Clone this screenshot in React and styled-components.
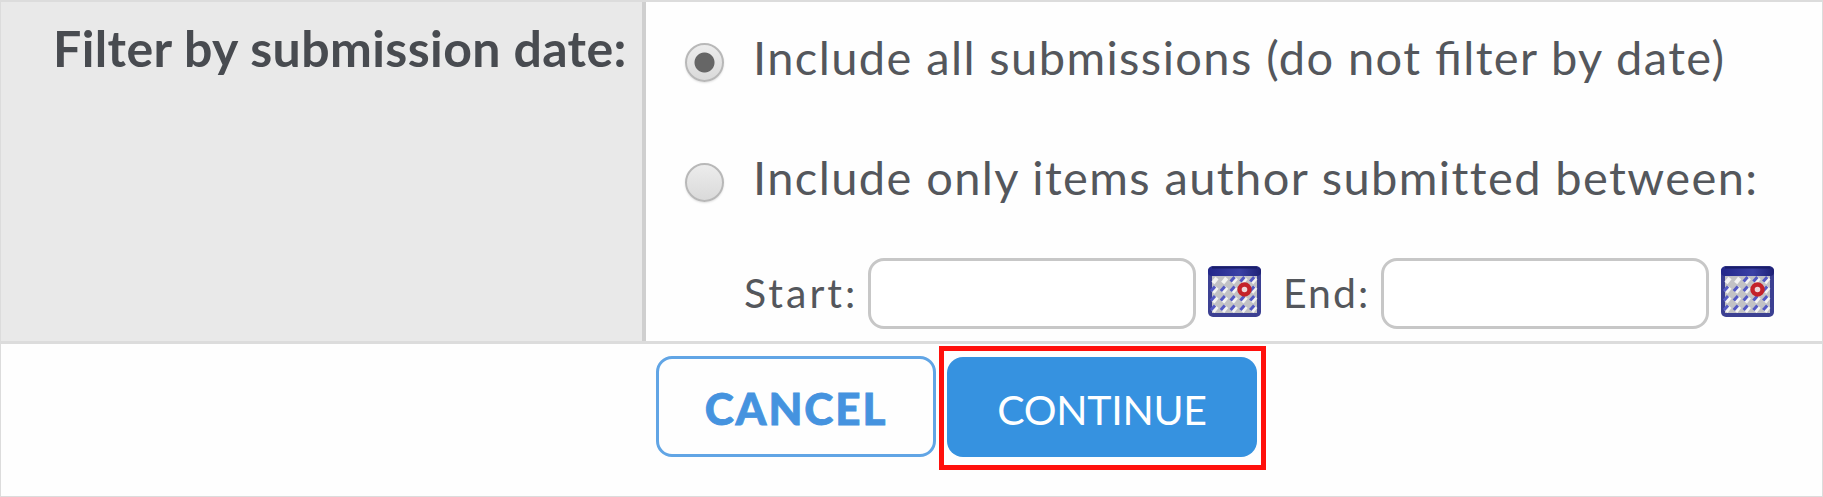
import React, { useState } from 'react'
import styled, { createGlobalStyle } from 'styled-components'

const GlobalStyle = createGlobalStyle`
	* {
		box-sizing: border-box;
	}
	body {
		margin: 0;
		background: #fefefe;
		font-family: Lato, 'Liberation Sans', sans-serif;
		color: #54575c;
	}
`

const Page = styled.form`
	width: 1823px;
	height: 497px;
	border: 1px solid #dcdcdc;
	border-top: 2px solid #dcdcdc;
	overflow: hidden;
`

const FilterRow = styled.div`
	display: flex;
	height: 342px;
	border-bottom: 3px solid #dcdcdc;
`

const Heading = styled.div`
	width: 645px;
	flex: none;
	padding: 16px 0 0 52px;
	background: #e9e9e9;
	border-right: 4px solid #cfcfcf;
	font-size: 50px;
	font-weight: 700;
	line-height: 60px;
	letter-spacing: 0.4px;
	color: #484b50;
	white-space: nowrap;
`

const Options = styled.div`
	flex: 1;
	padding: 25px 0 0 39px;
`

const Option = styled.label`
	display: flex;
	align-items: flex-start;
	height: 120px;
	font-size: 47px;
	line-height: 60px;
	letter-spacing: 1.4px;
	font-feature-settings: 'liga' ${({ ligatures }) => (ligatures ? 1 : 0)};
	white-space: nowrap;
`

const Radio = styled.input`
	appearance: none;
	flex: none;
	width: 39px;
	height: 39px;
	margin: 16px 29px 0 0;
	border: 2px solid #b8b8b8;
	border-radius: 50%;
	background: linear-gradient(#ececec, #dadada);
	box-shadow: 0 1px 2px rgba(0, 0, 0, 0.12);

	&:checked {
		background: radial-gradient(circle, #666 0 9.5px, transparent 10.5px),
			linear-gradient(#ececec, #dadada);
	}
`

const Dates = styled.div`
	display: flex;
	align-items: flex-start;
	margin-top: -9px;
	padding-left: 59px;
`

const DateLabel = styled.label`
	width: ${({ width }) => width};
	padding-top: 10px;
	font-size: 41px;
	line-height: 50px;
	letter-spacing: ${({ spacing }) => spacing};
	white-space: nowrap;
`

const DateInput = styled.input`
	width: 328px;
	height: 71px;
	padding: 0 16px;
	border: 3px solid #c7c7c7;
	border-radius: 16px;
	background: #fff;
	font: inherit;
	font-size: 36px;
`

const CalendarSvg = styled.svg`
	flex: none;
	width: 53px;
	height: 51px;
	margin: 8px 22px 0 12px;
`

const Actions = styled.div`
	display: flex;
	align-items: flex-start;
	padding: 2px 0 0 655px;
`

const Button = styled.button`
	border-radius: 16px;
	font-family: inherit;
	cursor: pointer;
`

const Cancel = styled(Button)`
	width: 280px;
	height: 101px;
	margin: 10px 3px 0 0;
	padding: 3px 0 0;
	border: 3px solid #61a5e5;
	background: #fefefe;
	color: #4593df;
	font-size: 44px;
	font-weight: 900;
	letter-spacing: 1.9px;
	-webkit-text-stroke: 0.8px #4593df;
`

const Highlight = styled.div`
	width: 327px;
	height: 124px;
	padding: 6px 0 0 3px;
	border: 5px solid #ff100c;
`

const Continue = styled(Button)`
	width: 310px;
	height: 100px;
	padding: 4px 0 0;
	border: none;
	background: #3692e0;
	color: #fff;
	font-size: 41px;
	font-weight: 400;
	letter-spacing: -0.3px;
`

const rows = [0, 1, 2, 3]
const cols = [0, 1, 2, 3, 4]

const Calendar = () => (
	<CalendarSvg viewBox="0 0 53 51">
		<defs>
			<linearGradient id="bar" x1="0" x2="1" y1="0" y2="0">
				<stop offset="0" stopColor="#23278a" />
				<stop offset="0.6" stopColor="#3b41a6" />
				<stop offset="1" stopColor="#1d2074" />
			</linearGradient>
			<filter id="soft">
				<feGaussianBlur stdDeviation="0.7" />
			</filter>
		</defs>
		<rect width="53" height="51" rx="5" fill="#3c4092" />
		<rect y="1" width="53" height="9" rx="4" fill="url(#bar)" />
		<path d="M4 1.5H49" stroke="#191d68" strokeWidth="2" />
		<g filter="url(#soft)">
			<rect x="4" y="10" width="45" height="37" fill="#c2c2c5" />
			{rows.map((r) =>
				cols.map((c) => (
					<g key={`${r}-${c}`}>
						<path
							d={`M${5 + c * 9.7} ${17 + r * 9.6}l4-5`}
							stroke="#f4f4f2"
							strokeWidth="4"
						/>
						{(r > 0 || c > 1) && (
							<path
								d={`M${3 + c * 9.8} ${15.5 + r * 9.5}l4-4.5`}
								stroke="#5359c4"
								strokeWidth="3"
							/>
						)}
					</g>
				))
			)}
			<circle cx="36.5" cy="23.5" r="5" fill="#eed7da" stroke="#c4242c" strokeWidth="4.4" />
		</g>
	</CalendarSvg>
)

const App = () => {
	const [range, setRange] = useState('all')

	return (
		<>
			<GlobalStyle />
			<Page onSubmit={(e) => e.preventDefault()}>
				<FilterRow>
					<Heading>Filter by submission date:</Heading>
					<Options>
						<Option ligatures>
							<Radio
								type="radio"
								name="range"
								checked={range === 'all'}
								onChange={() => setRange('all')}
							/>
							<span>Include all submissions (do not filter by date)</span>
						</Option>
						<Option>
							<Radio
								type="radio"
								name="range"
								checked={range === 'between'}
								onChange={() => setRange('between')}
							/>
							<span>Include only items author submitted between:</span>
						</Option>
						<Dates>
							<DateLabel htmlFor="start" width="124px" spacing="3px">
								Start:
							</DateLabel>
							<DateInput id="start" type="text" />
							<Calendar />
							<DateLabel htmlFor="end" width="98px" spacing="2px">
								End:
							</DateLabel>
							<DateInput id="end" type="text" />
							<Calendar />
						</Dates>
					</Options>
				</FilterRow>
				<Actions>
					<Cancel type="button">CANCEL</Cancel>
					<Highlight>
						<Continue type="submit">CONTINUE</Continue>
					</Highlight>
				</Actions>
			</Page>
		</>
	)
}

export default App
